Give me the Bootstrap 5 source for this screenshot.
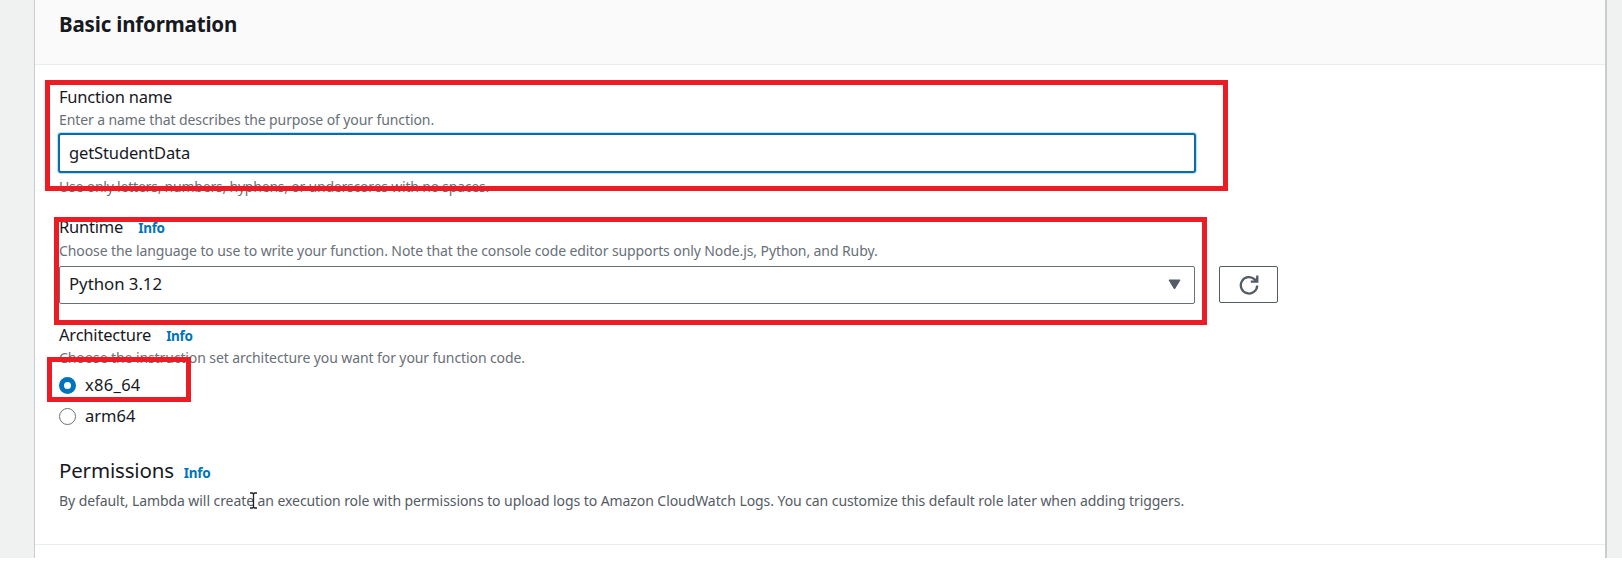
<!DOCTYPE html>
<html lang="en">
<head>
<meta charset="utf-8">
<meta name="viewport" content="width=device-width, initial-scale=1">
<title>Create function</title>
<link href="https://cdn.jsdelivr.net/npm/bootstrap@5.3.0/dist/css/bootstrap.min.css" rel="stylesheet">
<script src="https://cdn.jsdelivr.net/npm/bootstrap@5.3.0/dist/js/bootstrap.bundle.min.js" defer></script>
<style>
body{font-family:"Noto Sans","Open Sans",sans-serif;color:#16191f;background:#fff;overflow:hidden}
.page{height:558px;background:#f0f2f2;padding:0 15px 0 34px;overflow:hidden}
.panel{height:558px;background:#fff;border:solid #c9cdcd;border-width:0 2px 0 1px}
.panel-head{height:65px;background:#fafafa;border-bottom:1px solid #eaeded;padding:10px 24px 0}
.panel-head h2{font-size:20.5px;line-height:28px;font-weight:700;margin:0;letter-spacing:-.17px}
.panel-main{height:480px;padding:20px 24px 0;border-bottom:1px solid #eaeded}
.lbl{font-size:16.5px;line-height:23px;height:23px;letter-spacing:-.2px}
.lbl.runtime{margin-top:17px}
.lbl.arch{margin-top:19px}
.lbl .info{margin-left:15px}
.hint{font-size:14px;line-height:23px;height:23px;color:#687078;white-space:nowrap;letter-spacing:-.095px}
.hint.constraint{margin-top:2px;letter-spacing:-.21px}
.hint.language{margin:1px 0 4px}
.hint.summary{color:#545b64;letter-spacing:-.073px;margin-top:5px}
.info{font-size:13.5px;font-weight:700;color:#0073bb;text-decoration:none;letter-spacing:-.3px}
.name-input{width:1138px;height:40px;margin:2px 0 0 -1px;border:2px solid #0f6aa5;border-radius:3px;box-shadow:0 0 0 1px #b5e3f7;padding:0 9px 2px;font-size:16.5px;line-height:24px;letter-spacing:-.12px;color:#16191f;background:#fff;outline:0}
.pick{width:1136px;height:38px;border:1px solid #687078;border-radius:2px;padding:0 13px 2px 9px;font-size:16.8px;letter-spacing:-.03px}
.reload{width:59px;height:37px;border:1px solid #545b64;border-radius:2px;background:#fff;padding:0;margin-left:24px}
.dot{width:17px;height:17px;border:1px solid #687078;border-radius:50%;flex:none}
.dot.on{border:5.5px solid #0073bb}
.opt{font-size:16.5px;line-height:24px;height:24px;gap:9px}
.opt span:last-child{margin-top:-1px}
.opt:not(.alt) span:last-child{letter-spacing:.3px}
.opt.alt{margin-top:7px}
.perm{font-size:20.5px;line-height:28px;height:28px;letter-spacing:-.17px;margin-top:28px}
.perm .info{margin-left:10px}
.mark-box{position:absolute;border:5px solid #ed1c24;pointer-events:none}
.m1{left:45px;top:80px;width:1183px;height:111px}
.m2{left:54px;top:217px;width:1153px;height:108px}
.m3{left:47px;top:357px;width:144px;height:45px}
.ibeam{position:absolute;left:249px;top:492px}
</style>
</head>
<body>
<div class="page position-relative">
<main class="panel">
<header class="panel-head"><h2>Basic information</h2></header>
<section class="panel-main">
<div class="lbl">Function name</div>
<div class="hint">Enter a name that describes the purpose of your function.</div>
<input class="name-input d-block" type="text" value="getStudentData" aria-label="Function name">
<div class="hint constraint">Use only letters, numbers, hyphens, or underscores with no spaces.</div>
<div class="lbl runtime d-flex align-items-baseline">Runtime<a class="info">Info</a></div>
<div class="hint language">Choose the language to use to write your function. Note that the console code editor supports only Node.js, Python, and Ruby.</div>
<div class="d-flex">
<div class="pick d-flex align-items-center justify-content-between"><span>Python 3.12</span>
<svg width="13" height="11" viewBox="0 0 13 11"><path d="M1 1h11L6.500 10z" fill="#545b64" stroke="#545b64" stroke-linejoin="round"/></svg></div>
<button class="reload d-flex align-items-center justify-content-center" type="button" aria-label="Refresh">
<svg width="20" height="20" viewBox="0 0 20 20" fill="none" stroke="#545b64" stroke-width="2.300"><path d="M18.200 10.500a8.200 8.200 0 1 1-2.500-6.100L17.500 6"/><path d="M18.300 .5V6.700h-6.500"/><path d="M14 6.500l4-4v4z" fill="#545b64" stroke="none"/></svg></button>
</div>
<div class="lbl arch d-flex align-items-baseline">Architecture<a class="info">Info</a></div>
<div class="hint">Choose the instruction set architecture you want for your function code.</div>
<div class="opt d-flex align-items-center mt-1"><span class="dot on"></span><span>x86_64</span></div>
<div class="opt alt d-flex align-items-center"><span class="dot"></span><span>arm64</span></div>
<div class="perm d-flex align-items-baseline">Permissions<a class="info">Info</a></div>
<div class="hint summary">By default, Lambda will create an execution role with permissions to upload logs to Amazon CloudWatch Logs. You can customize this default role later when adding triggers.</div>
</section>
</main>
<div class="mark-box m1"></div>
<div class="mark-box m2"></div>
<div class="mark-box m3"></div>
<svg class="ibeam" width="9" height="17" viewBox="0 0 9 17" fill="none" stroke="#222" stroke-width="1.300"><path d="M1 1h2.500l1 1 1-1H8M4.500 2v13M1 16h2.500l1-1 1 1H8"/></svg>
</div>
</body>
</html>
